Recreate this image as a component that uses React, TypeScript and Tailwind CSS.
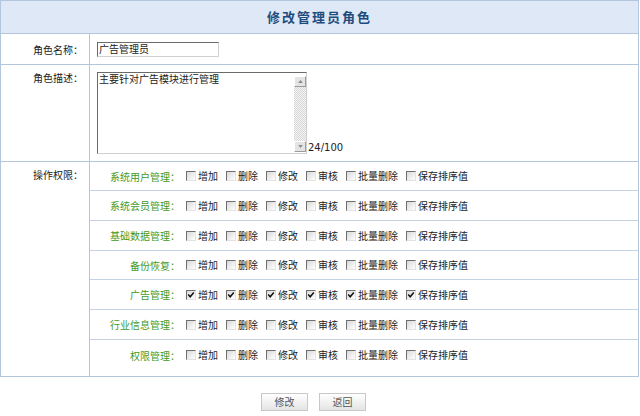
import React from 'react';

const cjk = '"Noto Sans CJK SC", "Noto Sans", sans-serif';

const actions = ['增加', '删除', '修改', '审核', '批量删除', '保存排序值'];

const modules = [
  { name: '系统用户管理：', checked: false, h: 'h-[29px] border-b' },
  { name: '系统会员管理：', checked: false, h: 'h-[30px] border-b' },
  { name: '基础数据管理：', checked: false, h: 'h-[30px] border-b' },
  { name: '备份恢复：', checked: false, h: 'h-[29px] border-b' },
  { name: '广告管理：', checked: true, h: 'h-[30px] border-b' },
  { name: '行业信息管理：', checked: false, h: 'h-[30px] border-b' },
  { name: '权限管理：', checked: false, h: 'h-[30px]' },
];

function Check({ checked }: { checked: boolean }) {
  return (
    <span className="relative inline-block w-[10px] h-[10px] shrink-0 border-t border-l border-[#6f6f6f] border-r border-b border-r-[#e2e2e2] border-b-[#e2e2e2] bg-gradient-to-br from-[#d9d9d9] to-white">
      {checked && (
        <svg viewBox="0 0 8 8" className="absolute left-[0px] top-[0px] w-[8px] h-[8px]">
          <path d="M1.2 3.6 L3.2 5.8 L6.8 1.6" fill="none" stroke="#111" strokeWidth="1.5" />
        </svg>
      )}
    </span>
  );
}

function ScrollBtn({ up }: { up: boolean }) {
  return (
    <div className="h-[11px] w-full flex items-center justify-center bg-[#e4e4e4] border border-t-white border-l-white border-r-[#9c9c9c] border-b-[#9c9c9c]">
      <svg viewBox="0 0 6 4" className="w-[5px] h-[3px]">
        <path d={up ? 'M0 4 L3 0 L6 4 Z' : 'M0 0 L3 4 L6 0 Z'} fill="#8a8a8a" />
      </svg>
    </div>
  );
}

export default function App() {
  return (
    <div className="w-[640px] h-[416px] bg-white text-[10px] text-[#222]" style={{ fontFamily: cjk }}>
      <div className="w-[639px] border border-[#b3c6dc]">
        {/* title */}
        <div className="h-[33px] border-b border-[#b3c6dc] bg-[#dfe8f6] flex items-center justify-center">
          <span className="text-[13px] font-bold tracking-[2px] text-[#1d4c7e]">修改管理员角色</span>
        </div>

        {/* name */}
        <div className="h-[31px] border-b border-[#b3c6dc] flex">
          <div className="w-[89px] border-r border-[#b3c6dc] flex items-center justify-end pr-[6px]">角色名称：</div>
          <div className="flex-1 flex items-center pl-[7px]">
            <div className="w-[122px] h-[15px] border-t border-l border-[#6a6a6a] border-r border-b border-r-[#d0d0d0] border-b-[#d0d0d0] bg-white flex items-center pl-[1px] leading-none">
              广告管理员
            </div>
          </div>
        </div>

        {/* description */}
        <div className="h-[97px] border-b border-[#b3c6dc] flex">
          <div className="w-[89px] border-r border-[#b3c6dc] flex justify-end pr-[6px] pt-[8px] leading-[10px]">角色描述：</div>
          <div className="flex-1 flex items-end pl-[7px] pb-[7px]">
            <div className="w-[210px] h-[82px] border-t border-l border-[#6a6a6a] border-r border-b border-r-[#d0d0d0] border-b-[#d0d0d0] bg-white flex">
              <div className="flex-1 pl-[1px] pt-[1px] leading-[10px]">主要针对广告模块进行管理</div>
              <div className="w-[12px] flex flex-col">
                <div className="mt-[3px]">
                  <ScrollBtn up />
                </div>
                <div className="flex-1 bg-[repeating-conic-gradient(#d6d6d6_0%_25%,#f5f5f5_0%_50%)] bg-[length:2px_2px]" />
                <div className="mb-[1px]">
                  <ScrollBtn up={false} />
                </div>
              </div>
            </div>
            <span className="ml-[1px] mb-[1px] leading-none text-[10px] text-[#222]" style={{ fontFamily: '"DejaVu Sans", sans-serif' }}>
              24/100
            </span>
          </div>
        </div>

        {/* permissions */}
        <div className="h-[214px] flex">
          <div className="w-[89px] border-r border-[#b3c6dc] flex justify-end pr-[6px] pt-[8px] leading-[10px]">操作权限：</div>
          <div className="flex-1 flex flex-col">
            {modules.map((m) => (
              <div key={m.name} className={`${m.h} border-[#c3d3e4] flex items-center shrink-0`}>
                <div className="w-[90px] text-right text-[#3f9a1f]">{m.name}</div>
                <div className="flex items-center pl-[6px]">
                  {actions.map((a) => (
                    <div key={a} className="flex items-center mr-[8px]">
                      <Check checked={m.checked} />
                      <span className="ml-[2px] leading-none">{a}</span>
                    </div>
                  ))}
                </div>
              </div>
            ))}
          </div>
        </div>
      </div>

      {/* buttons */}
      <div className="w-[639px] flex justify-center gap-[11px] pt-[16px] pr-[12px]">
        {['修改', '返回'].map((b) => (
          <button
            key={b}
            className="w-[47px] h-[18px] border border-[#c8c8c8] bg-gradient-to-b from-white to-[#e4e4e4] text-[10px] text-[#555] leading-none"
            style={{ fontFamily: cjk }}
          >
            {b}
          </button>
        ))}
      </div>
    </div>
  );
}
